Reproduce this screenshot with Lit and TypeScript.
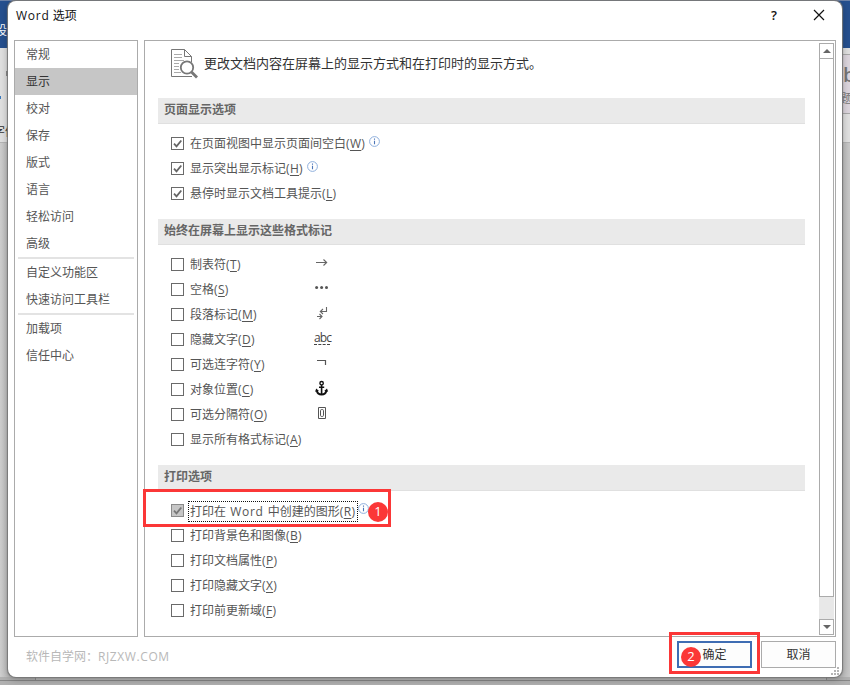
import { LitElement, html, svg, css, nothing } from "lit";
import { customElement, property } from "lit/decorators.js";

interface Option {
  label: string;
  key: string;
  checked?: boolean;
  info?: boolean;
  focused?: boolean;
  mark?: string;
}

const GROUPS: { title: string; options: Option[] }[] = [
  {
    title: "页面显示选项",
    options: [
      { label: "在页面视图中显示页面间空白", key: "W", checked: true, info: true },
      { label: "显示突出显示标记", key: "H", checked: true, info: true },
      { label: "悬停时显示文档工具提示", key: "L", checked: true },
    ],
  },
  {
    title: "始终在屏幕上显示这些格式标记",
    options: [
      { label: "制表符", key: "T", mark: "tab" },
      { label: "空格", key: "S", mark: "space" },
      { label: "段落标记", key: "M", mark: "paragraph" },
      { label: "隐藏文字", key: "D", mark: "hidden" },
      { label: "可选连字符", key: "Y", mark: "hyphen" },
      { label: "对象位置", key: "C", mark: "anchor" },
      { label: "可选分隔符", key: "O", mark: "break" },
      { label: "显示所有格式标记", key: "A" },
    ],
  },
  {
    title: "打印选项",
    options: [
      { label: "打印在 Word 中创建的图形", key: "R", checked: true, info: true, focused: true },
      { label: "打印背景色和图像", key: "B" },
      { label: "打印文档属性", key: "P" },
      { label: "打印隐藏文字", key: "X" },
      { label: "打印前更新域", key: "F" },
    ],
  },
];

const NAV = [
  ["常规", "显示", "校对", "保存", "版式", "语言", "轻松访问", "高级"],
  ["自定义功能区", "快速访问工具栏"],
  ["加载项", "信任中心"],
];

const MARKS: Record<string, unknown> = {
  tab: svg`<path d="M3 10.5H14M10.5 7.5L13.7 10.5L10.5 13.5" fill="none" stroke="#666" stroke-width="1.1"/>`,
  space: svg`<g fill="#555"><circle cx="3.6" cy="10.6" r="1.5"/><circle cx="8.6" cy="10.6" r="1.5"/><circle cx="13.5" cy="10.6" r="1.5"/></g>`,
  paragraph: svg`<path d="M13.5 5V9.5H7.5M10 7L7.3 9.5L10 12M4 14.5H9M6.5 12L9 14.5L6.5 17" fill="none" stroke="#666" stroke-width="1.1"/>`,
  hyphen: svg`<path d="M4 8.5H12.5V13" fill="none" stroke="#555" stroke-width="1.2"/>`,
  anchor: svg`<g fill="none" stroke="#111"><circle cx="8.6" cy="6.2" r="1.7" stroke-width="1.4"/><path d="M8.6 8V18M6 10.2H11.2" stroke-width="1.6"/><path d="M3.8 13.3Q4.4 17.4 8.6 17.4Q12.8 17.4 13.4 13.3" stroke-width="2"/></g><path d="M2.1 14.8L3.2 11.5L6 14zM15.1 14.8L14 11.5L11.2 14z" fill="#111"/>`,
  break: svg`<path d="M5.5 5.5H12.5V16.5H5.5z" fill="none" stroke="#555"/><rect x="7.5" y="7.5" width="3" height="7" rx="1.2" fill="none" stroke="#555"/>`,
};

@customElement("option-row")
class OptionRow extends LitElement {
  @property({ attribute: false }) option!: Option;

  static styles = css`
    :host { display: flex; align-items: center; height: 25px; padding-left: 13px; position: relative; color: #555; }
    .box { width: 13px; height: 13px; box-sizing: border-box; border: 1px solid #6a6a6a; background: #fff; flex: none; display: block; }
    .box.on-focus { background: #c6c6c6; border-color: #8a8a8a; }
    .box svg { display: block; }
    .label { margin-left: 4px; padding: 0 1px; height: 19px; line-height: 17px; border: 1px solid transparent; white-space: pre; box-sizing: border-box; }
    .label.focus { border: 1px dotted #111; height: 21px; line-height: 19px; width: 170px; margin-top: 1px; word-spacing: 1px; }
    .latin { letter-spacing: 0.75px; }
    .shortcut { letter-spacing: 0.35px; }
    .key { text-decoration: underline; text-underline-offset: 2px; text-decoration-thickness: 1px; }
    .info { width: 11px; height: 11px; margin: 0 0 4px 2px; }
    .info.tight { margin-left: 0; }
    .mark { position: absolute; left: 155px; top: 0; width: 18px; height: 20px; }
    .abc { font-size: 12px; line-height: 12px; height: 13px; top: 5px; left: 156px; width: 16px; border-bottom: 1px dashed #444; color: #444; letter-spacing: -0.9px; text-align: center; box-sizing: border-box; }
  `;

  render() {
    const o = this.option;
    const parts = o.label.split(/([A-Za-z]+)/);
    return html`
      <span class="box ${o.focused ? "on-focus" : ""}">
        ${o.checked
          ? html`<svg width="11" height="11"><path d="M2 5.7L4.5 8.3L9.3 2.5" fill="none" stroke=${o.focused ? "#777" : "#666"} stroke-width="1.8" /></svg>`
          : nothing}
      </span>
      <span class="label ${o.focused ? "focus" : ""}">${parts.map((p, i) => (i % 2 ? html`<span class="latin">${p}</span>` : p))}<span class="shortcut">(<span class="key">${o.key}</span>)</span></span>
      ${o.info
        ? html`<svg class="info ${o.focused ? "tight" : ""}" viewBox="0 0 11 11"><circle cx="5.5" cy="5.5" r="4.9" fill="#fff" stroke="#8eafdc" /><path d="M5.5 4.7V8.3M5.5 2.6V3.8" stroke="#4c76b8" stroke-width="1.1" /></svg>`
        : nothing}
      ${o.mark === "hidden"
        ? html`<span class="mark abc">abc</span>`
        : o.mark
          ? html`<svg class="mark" viewBox="0 0 18 20">${MARKS[o.mark]}</svg>`
          : nothing}
    `;
  }
}

@customElement("app-root")
class AppRoot extends LitElement {
  static styles = css`
    :host {
      display: block; position: relative; width: 850px; height: 685px; overflow: hidden;
      font: 12px/16px "Open Sans", "Noto Sans CJK SC", sans-serif; color: #555; background: #c5c5c5;
      --red: #fb3737;
    }
    .backdrop { position: absolute; inset: 0; display: grid; grid-template-rows: 48px 95px 1fr 8px; }
    .ribbon-top { background: #26508f; border-top: 1px solid #6c82a8; box-sizing: border-box; }
    .ribbon { background: #e1e1e1; border-bottom: 1px solid #b5b5b5; box-sizing: border-box; display: flex; justify-content: flex-end; }
    .style-tile { width: 9px; height: 58px; margin-top: 6px; border-top: 1px solid #aaa; border-bottom: 1px solid #aaa; background: #ddd6de; }
    .canvas { background: linear-gradient(90deg, #cfcfcf, #bebebe 8px, #bebebe 842px, #c9c9c9); }
    .status { background: #b1b1b1; display: flex; flex-direction: column; }
    .page-edge { height: 3px; margin-left: 35px; width: 792px; border: solid #8e8e8e; border-width: 0 1px; background: #b9b9b9; box-sizing: border-box; }
    .status-line { height: 1px; background: #888; }
    .peek { position: absolute; white-space: nowrap; }
    .peek.tab { left: -5px; top: 23px; color: #fff; }
    .peek.font { left: -7px; top: 124px; color: #333; }
    .peek.accent { left: 0; top: 96px; width: 1px; height: 3px; background: #397ac0; }
    .peek.tick { left: 6px; top: 71px; width: 2px; height: 5px; background: #888; }
    .peek.sample { left: 843px; top: 62px; font-size: 20px; line-height: 25px; font-weight: 600; color: #777; }
    .peek.caption { left: 840px; top: 91px; color: #777; }
    .dialog {
      position: absolute; left: 8px; top: 1px; width: 834px; height: 676px; box-sizing: border-box; padding: 0 6px;
      background: #fff; border-radius: 8px; box-shadow: 0 0 1px 0.5px #777, 0 2px 8px rgba(0, 0, 0, 0.3);
      display: flex; flex-direction: column;
    }
    .titlebar { height: 39px; display: flex; color: #111; padding: 7px 11px 0 2px; box-sizing: border-box; }
    .caption-text { flex: 1; }
    .latin { letter-spacing: 0.75px; }
    .help { font-size: 13px; width: 10px; margin-right: 34px; margin-top: -1px; font-weight: 600; text-align: center; }
    .close { width: 12px; height: 12px; margin-top: 1px; }
    .body { display: flex; gap: 6px; height: 597px; }
    .nav { width: 124px; box-sizing: border-box; border: 1px solid #ababab; }
    .item { height: 27px; line-height: 28px; padding-left: 11px; }
    .item.selected { background: #c6c6c6; color: #333; }
    .rule { height: 2px; background: #e3e3e3; margin: 0 3px; }
    .content { width: 692px; box-sizing: border-box; border: 1px solid #ababab; display: flex; justify-content: space-between; padding: 2px 1px 1px 13px; }
    .page { width: 647px; }
    .intro { height: 55px; padding: 5px 0 0 12px; box-sizing: border-box; display: flex; font-size: 13px; color: #333; }
    .intro svg { flex: none; margin-right: 5px; }
    .intro span { line-height: 32px; margin-top: -1px; white-space: nowrap; }
    .head { height: 26px; box-sizing: border-box; border-bottom: 1px solid #e0e0e0; background: #eaeaea; padding-left: 6px; line-height: 24px; font-weight: 700; color: #666; margin-bottom: 7px; }
    .group { padding-bottom: 13px; }
    .scroll { width: 15px; background: #e8e8e8; display: flex; flex-direction: column; }
    .arrow { height: 16px; box-sizing: border-box; border: 1px solid #ababab; background: #fff; display: flex; align-items: center; justify-content: center; }
    .thumb { height: 539px; box-sizing: border-box; border: 1px solid #ababab; background: #fff; margin-top: -1px; margin-bottom: auto; }
    .footer { display: flex; align-items: flex-start; padding-top: 4px; gap: 9px; }
    .credit { flex: 1; padding: 8px 0 0 12px; color: #b8b8b8; }
    .credit .latin { letter-spacing: 0.6px; }
    .btn { width: 75px; height: 27px; box-sizing: border-box; border: 1px solid #ababab; background: #fdfdfd; color: #333; text-align: center; line-height: 26px; }
    .btn.primary { border: 2px solid #3f6db3; line-height: 24px; }
    .grip { position: absolute; right: 2px; bottom: 1px; }
    .outline { position: absolute; border: 3px solid var(--red); box-sizing: border-box; }
    .outline.one { left: 143px; top: 489px; width: 248px; height: 38px; }
    .outline.two { left: 669px; top: 632px; width: 91px; height: 42px; }
    .badge { position: absolute; width: 20px; height: 20px; border-radius: 50%; background: var(--red); color: #fff; text-align: center; line-height: 19px; font-size: 13px; }
    .badge.one { left: 368px; top: 502px; }
    .badge.two { left: 681px; top: 647px; }
  `;

  render() {
    return html`
      <div class="backdrop">
        <div class="ribbon-top"></div>
        <div class="ribbon"><div class="style-tile"></div></div>
        <div class="canvas"></div>
        <div class="status"><div class="page-edge"></div><div class="status-line"></div></div>
      </div>
      <span class="peek tab">设计</span>
      <span class="peek font">字体</span>
      <span class="peek accent"></span>
      <span class="peek tick"></span>
      <span class="peek sample">b</span>
      <span class="peek caption">题</span>
      <div class="dialog">
        <div class="titlebar">
          <span class="caption-text"><span class="latin">Word</span> 选项</span>
          <span class="help">?</span>
          <svg class="close" viewBox="0 0 12 12"><path d="M1 1L11 11M11 1L1 11" stroke="#111" stroke-width="1.2" /></svg>
        </div>
        <div class="body">
          <nav class="nav">
            ${NAV.map((items, i) => html`
              ${i ? html`<div class="rule"></div>` : nothing}
              ${items.map((t) => html`<div class="item ${t === "显示" ? "selected" : ""}">${t}</div>`)}
            `)}
          </nav>
          <main class="content">
            <div class="page">
              <div class="intro">
                <svg width="29" height="32" viewBox="0 0 29 32" fill="none">
                  <path d="M21.5 14V8.5L14.5 1.5H1.5V28.5H22" stroke="#777" />
                  <path d="M14.5 1.5V8.5H21.5" stroke="#777" />
                  <path d="M4 6.5H12M4 9.5H12M4 12.5H14M4 15.5H9M4 18.5H9M4 21.5H9M4 24.5H11" stroke="#aaa" />
                  <circle cx="17" cy="19.5" r="6.2" fill="#fff" stroke="#777" stroke-width="1.8" />
                  <path d="M21.5 24L27 29.5" stroke="#777" stroke-width="2.8" />
                </svg>
                <span>更改文档内容在屏幕上的显示方式和在打印时的显示方式。</span>
              </div>
              ${GROUPS.map((g) => html`
                <section class="group">
                  <div class="head">${g.title}</div>
                  ${g.options.map((o) => html`<option-row .option=${o}></option-row>`)}
                </section>
              `)}
            </div>
            <div class="scroll">
              <div class="arrow"><svg width="8" height="4"><path d="M0 4L4 0L8 4z" fill="#666" /></svg></div>
              <div class="thumb"></div>
              <div class="arrow"><svg width="8" height="4"><path d="M0 0L4 4L8 0z" fill="#666" /></svg></div>
            </div>
          </main>
        </div>
        <div class="footer">
          <span class="credit">软件自学网：<span class="latin">RJZXW.COM</span></span>
          <div class="btn primary">确定</div>
          <div class="btn">取消</div>
        </div>
        <svg class="grip" width="9" height="9" fill="#b5b5b5"><path d="M6 0h2v2h-2zM3 3h2v2h-2zM6 3h2v2h-2zM0 6h2v2h-2zM3 6h2v2h-2zM6 6h2v2h-2z" /></svg>
      </div>
      <div class="outline one"></div>
      <span class="badge one">1</span>
      <div class="outline two"></div>
      <span class="badge two">2</span>
    `;
  }
}
